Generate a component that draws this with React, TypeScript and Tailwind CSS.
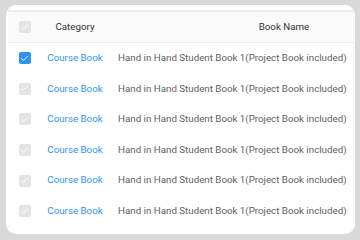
import { Check } from "lucide-react";

const rows = [
  { category: "Course Book", name: "Hand in Hand Student Book 1(Project Book included)", checked: true },
  { category: "Course Book", name: "Hand in Hand Student Book 1(Project Book included)", checked: false },
  { category: "Course Book", name: "Hand in Hand Student Book 1(Project Book included)", checked: false },
  { category: "Course Book", name: "Hand in Hand Student Book 1(Project Book included)", checked: false },
  { category: "Course Book", name: "Hand in Hand Student Book 1(Project Book included)", checked: false },
  { category: "Course Book", name: "Hand in Hand Student Book 1(Project Book included)", checked: false },
];

function Box({ checked }: { checked: boolean }) {
  return (
    <span
      className={
        checked
          ? "w-3 h-3 rounded-[2px] bg-[#2f93f6] flex items-center justify-center"
          : "w-3 h-3 rounded-[2px] bg-[#e4e4e4] flex items-center justify-center"
      }
    >
      <Check size={9} strokeWidth={2.5} className="text-white" />
    </span>
  );
}

export default function App() {
  return (
    <div
      className="w-[360px] h-[240px] bg-[#d9d9d9] pt-[5px] pl-[6px] pr-[5px] pb-[6px] overflow-hidden"
      style={{ fontFamily: "Roboto, sans-serif" }}
    >
      <div className="h-full bg-white rounded-[10px] pl-[2px] pr-[1px] pt-[5px] overflow-hidden">
        <div className="border-t-2 border-[#e6ecf1]">
          {/* header */}
          <div className="flex items-center h-[31px] bg-[#fafafa] border-b border-[#ededed] text-[9.75px] text-[#333]">
            <div className="w-[32px] flex justify-center pl-[1px]">
              <Box checked={false} />
            </div>
            <div className="w-[70px] text-center">Category</div>
            <div className="flex-1 text-center pl-[104px]">Book Name</div>
          </div>
          {rows.map((r, i) => (
            <div key={i} className="flex items-center h-[30.6px] text-[9.75px]">
              <div className="w-[32px] flex justify-center pl-[1px]">
                <Box checked={r.checked} />
              </div>
              <div className="w-[70px] text-center text-[#2f93f6]">{r.category}</div>
              <div className="flex-1 pl-[8px] text-[#606060] whitespace-nowrap">{r.name}</div>
            </div>
          ))}
        </div>
      </div>
    </div>
  );
}
